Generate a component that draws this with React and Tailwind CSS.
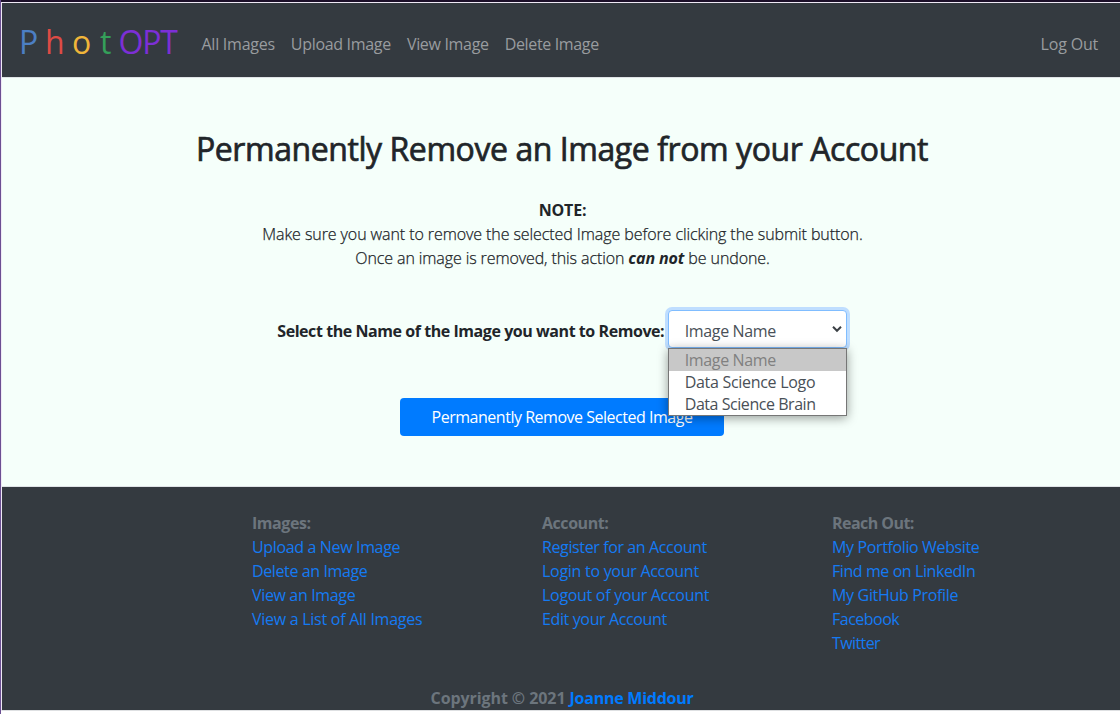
const nav = [
  ["All Images", "tracking-[-0.25px]"],
  ["Upload Image", "tracking-[-0.31px]"],
  ["View Image", "tracking-[-0.32px]"],
  ["Delete Image", "tracking-[-0.35px]"],
];

const columns = [
  {
    title: ["Images:", "tracking-[-0.45px]"],
    links: [
      ["Upload a New Image", "tracking-[-0.35px]"],
      ["Delete an Image", "tracking-[-0.38px]"],
      ["View an Image", "tracking-[-0.35px]"],
      ["View a List of All Images", "tracking-[-0.27px]"],
    ],
  },
  {
    title: ["Account:", "tracking-[-0.45px]"],
    links: [
      ["Register for an Account", "tracking-[-0.38px]"],
      ["Login to your Account", "tracking-[-0.28px]"],
      ["Logout of your Account", "tracking-[-0.3px]"],
      ["Edit your Account", "tracking-[-0.37px]"],
    ],
  },
  {
    title: ["Reach Out:", "tracking-[-0.55px]"],
    links: [
      ["My Portfolio Website", "tracking-[-0.37px]"],
      ["Find me on LinkedIn", "tracking-[-0.42px]"],
      ["My GitHub Profile", "tracking-[-0.33px]"],
      ["Facebook", "tracking-[-0.5px]"],
      ["Twitter", "tracking-[-0.6px]"],
    ],
  },
];

function Navbar() {
  return (
    <nav className="flex h-[74px] items-center bg-[#343a40] pl-4 pr-6 text-[#999c9f]">
      <a href="#" className="flex w-[183.5px] shrink-0 pl-px pt-1 text-[32px] leading-[48px]">
        <span className="w-[26px] text-[#4c7fc4]">P</span>
        <span className="w-[27px] text-[#dd4b45]">h</span>
        <span className="w-[28px] text-[#f0b53a]">o</span>
        <span className="w-[18.5px] text-[#34a05a]">t</span>
        <span className="tracking-[-1.2px] text-[#7c2fd6]">OPT</span>
      </a>
      <div className="flex grow gap-4 pt-2">
        {nav.map(([label, tracking]) => (
          <a key={label} href="#" className={tracking}>{label}</a>
        ))}
      </div>
      <a href="#" className="pt-2 tracking-[-0.2px]">Log Out</a>
    </nav>
  );
}

function ImageSelect() {
  return (
    <div className="relative ml-[3.5px] h-[38px] w-[179px]">
      <div className="flex h-full items-center justify-between rounded border border-[#80bdff] bg-white pl-4 pr-1 text-[#495057] shadow-[0_0_0_3px_#bfdeff]">
        <span className="pt-[3px] tracking-[-0.35px]">Image Name</span>
        <svg width="10" height="8" viewBox="0 0 10 8" fill="none" stroke="#3b4045" strokeWidth="2">
          <path d="M1 1.8 5 5.8 9 1.8" />
        </svg>
      </div>
      <ul className="absolute left-0 top-[38px] z-10 w-[179px] border border-[#767676] bg-white leading-[22px] text-[#495057] shadow-[0_2px_10px_rgba(0,0,0,0.4)]">
        <li className="bg-[#c8c8c8] pl-4 tracking-[-0.35px] text-[#808080]">Image Name</li>
        <li className="pl-4 tracking-[-0.3px]">Data Science Logo</li>
        <li className="pl-4 tracking-[-0.45px]">Data Science Brain</li>
      </ul>
    </div>
  );
}

function Main() {
  return (
    <main className="flex h-[410px] flex-col items-center border-y border-[#dfe3e6] bg-[#f5fffa] pt-[52px] text-[#212529]">
      <h1 className="whitespace-nowrap text-[32px] font-medium leading-[38px] tracking-[-0.43px] [-webkit-text-stroke:0.7px_#212529]">
        Permanently Remove an Image from your Account
      </h1>
      <div className="mt-[30px] pl-px text-center">
        <p className="font-bold tracking-[-0.2px]">NOTE:</p>
        <p className="font-light tracking-[-0.08px] [-webkit-text-stroke:0.25px_#212529]">
          Make sure you want to remove the selected Image before clicking the submit button.
        </p>
        <p className="font-light tracking-[-0.1px]">
          <span className="[-webkit-text-stroke:0.25px_#212529]">Once an image is removed, this action </span>
          <em className="font-bold">can not</em>
          <span className="[-webkit-text-stroke:0.25px_#212529]"> be undone.</span>
        </p>
      </div>
      <div className="mt-[40px] flex items-center">
        <label className="pt-[3px] font-bold tracking-[-0.44px]">
          Select the Name of the Image you want to Remove:
        </label>
        <ImageSelect />
      </div>
      <button className="mt-[50px] h-[38px] w-[324px] rounded bg-[#007bff] tracking-[-0.48px] text-white">
        Permanently Remove Selected Image
      </button>
    </main>
  );
}

function Footer() {
  return (
    <footer className="h-[223px] bg-[#343a40] pt-6 text-[#6c757d]">
      <div className="grid h-[175px] grid-cols-[290px_290px_200px] pl-[250px]">
        {columns.map(({ title, links }) => (
          <div key={title[0]} className="flex flex-col items-start">
            <strong className={title[1]}>{title[0]}</strong>
            {links.map(([label, tracking]) => (
              <a key={label} href="#" className={`text-[#147af3] ${tracking}`}>{label}</a>
            ))}
          </div>
        ))}
      </div>
      <p className="text-center font-bold tracking-[-0.08px]">
        Copyright © 2021 <a href="#" className="tracking-[-0.25px] text-[#007bff]">Joanne Middour</a>
      </p>
    </footer>
  );
}

export default function App() {
  return (
    <div className="h-[714px] w-[1120px] overflow-hidden border-l border-[#6b4f92] bg-white font-['Open_Sans','Noto_Sans',sans-serif] text-base leading-6">
      <div className="h-0.5 bg-[#1c0f29]" />
      <div className="w-[1121px] border-l border-t border-[#efe9f5]">
        <Navbar />
        <Main />
        <Footer />
        <div className="h-px bg-[#dee0e2]" />
      </div>
    </div>
  );
}
